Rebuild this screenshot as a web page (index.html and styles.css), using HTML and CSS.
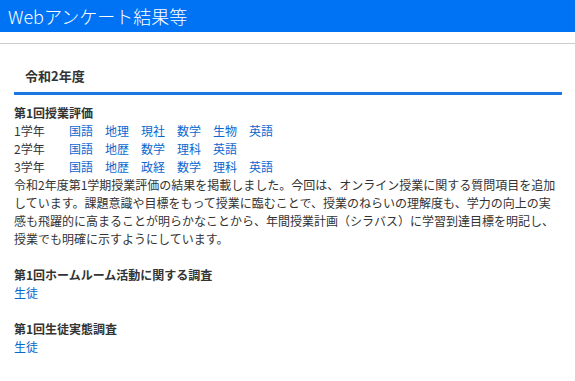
FILE: index.html
```html
<!DOCTYPE html>
<html lang="ja">
<head>
<meta charset="utf-8">
<title>Webアンケート結果等</title>
<link rel="stylesheet" href="styles.css">
</head>
<body>
<header class="topbar">Webアンケート結果等</header>
<main class="content">
  <h2 class="year">令和2年度</h2>
  <section class="survey">
    <h3 class="survey-title">第1回授業評価</h3>
    <div class="grade-row"><span class="grade">1学年</span><a href="#">国語</a><a href="#">地理</a><a href="#">現社</a><a href="#">数学</a><a href="#">生物</a><a href="#">英語</a></div>
    <div class="grade-row"><span class="grade">2学年</span><a href="#">国語</a><a href="#">地歴</a><a href="#">数学</a><a href="#">理科</a><a href="#">英語</a></div>
    <div class="grade-row"><span class="grade">3学年</span><a href="#">国語</a><a href="#">地歴</a><a href="#">政経</a><a href="#">数学</a><a href="#">理科</a><a href="#">英語</a></div>
    <p class="note">令和2年度第1学期授業評価の結果を掲載しました。今回は、オンライン授業に関する質問項目を追加しています。課題意識や目標をもって授業に臨むことで、授業のねらいの理解度も、学力の向上の実感も飛躍的に高まることが明らかなことから、年間授業計画（シラバス）に学習到達目標を明記し、授業でも明確に示すようにしています。</p>
  </section>
  <section class="survey">
    <h3 class="survey-title">第1回ホームルーム活動に関する調査</h3>
    <div class="grade-row"><a href="#">生徒</a></div>
  </section>
  <section class="survey">
    <h3 class="survey-title">第1回生徒実態調査</h3>
    <div class="grade-row"><a href="#">生徒</a></div>
  </section>
</main>
</body>
</html>
```
FILE: styles.css
```css
* { box-sizing: border-box; }
html, body {
  margin: 0;
  padding: 0;
  background: #fff;
}
body {
  font-family: "Noto Sans CJK JP", "Noto Sans", sans-serif;
  font-size: 12px;
  line-height: 18px;
  color: #333;
}
.topbar {
  height: 32px;
  background: #0073f5;
  color: #fff;
  font-size: 18px;
  line-height: 32px;
  padding-left: 8px;
  font-weight: 300;
  margin-bottom: 11px;
}
.content {
  border-top: 1px solid #cccccc;
  padding: 0 13px 0 14px;
}
.year {
  margin: 23px 0 0;
  padding: 0 0 7px 11px;
  font-size: 13px;
  line-height: 18px;
  font-weight: bold;
  color: #333;
  border-bottom: 3px solid #1a78e0;
}
.survey {
  margin-top: 18px;
}
.survey:first-of-type {
  margin-top: 9px;
}
.survey-title {
  margin: 0;
  font-size: 12px;
  line-height: 18px;
  font-weight: bold;
  color: #333;
}
.grade-row {
  display: flex;
}
.grade {
  width: 55px;
  flex: none;
}
.grade-row a {
  color: #0a68d0;
  text-decoration: none;
  margin-right: 12px;
}
.note {
  margin: 0;
}
```
